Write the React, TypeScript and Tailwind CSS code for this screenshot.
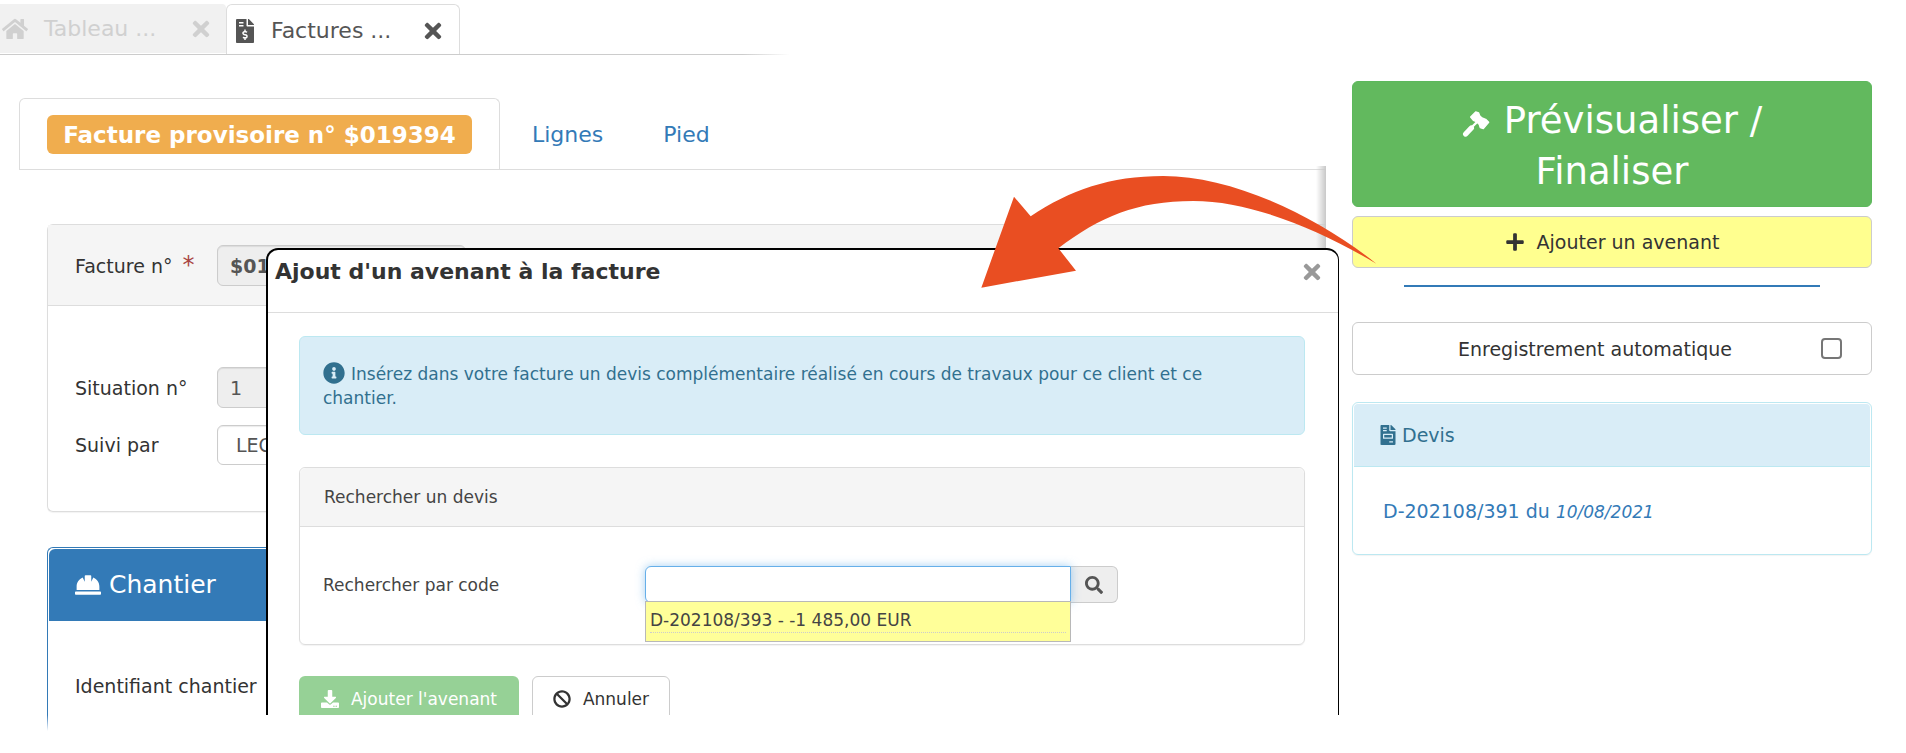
import { useState, type ReactNode } from "react";
import {
  FaBan,
  FaDownload,
  FaFileInvoice,
  FaFileInvoiceDollar,
  FaHardHat,
  FaHome,
  FaInfoCircle,
  FaPlus,
  FaSearch,
  FaTimes,
} from "react-icons/fa";

function GavelIcon({ className }: { className: string }) {
  return (
    <svg aria-hidden="true" viewBox="60 36 84 81" className={className}>
      <path fill="currentColor" stroke="currentColor" strokeWidth="4" strokeLinejoin="round" d="M86 54 L101 39 L110 42 L113 50 L120 57 L131 61 L140 70 L124 89 L115 86 L112 77 L105 69 L94 64 Z" />
      <path stroke="currentColor" strokeWidth="7" d="M110 64 L90 84" />
      <path stroke="currentColor" strokeWidth="16" strokeLinecap="round" d="M88 87 L71 105" />
    </svg>
  );
}

function WindowTabs() {
  return (
    <header className="relative flex h-[55px] items-start pt-1 text-[22px]">
      <div className="absolute bottom-0 left-0 h-px w-[790px] bg-linear-to-r from-[#ccc] from-94% to-white" />
      <div className="flex h-[49px] w-[226px] items-center rounded-tr bg-[#f1f1f1] text-[#d0d0d0]">
        <FaHome className="ml-0.5 size-[26px]" />
        <a href="#tableau" className="ml-4">Tableau ...</a>
        <button aria-label="Fermer Tableau" className="mr-[13px] ml-auto">
          <FaTimes className="size-6" />
        </button>
      </div>
      <div className="relative flex h-[50px] w-[234px] items-center rounded-t-md border border-b-0 border-[#ddd] bg-white pt-[3px] text-[#555]">
        <FaFileInvoiceDollar className="ml-1.5 size-6" />
        <a href="#factures" className="ml-3.5">Factures ...</a>
        <button aria-label="Fermer Factures" className="mr-3.5 ml-auto">
          <FaTimes className="size-6" />
        </button>
      </div>
    </header>
  );
}

function InvoiceTabs() {
  return (
    <nav className="flex h-[72px] border-b border-[#ddd] text-[22px] text-[#337ab7]">
      <div className="h-[71px] w-[481px] rounded-t-md border border-b-0 border-[#ddd] bg-white">
        <a href="#facture" className="mx-[27px] mt-4 flex h-[39px] items-center justify-center rounded-md bg-[#f0ad4e] text-[23px] font-bold whitespace-nowrap text-white">
          Facture provisoire n° $019394
        </a>
      </div>
      <a href="#lignes" className="mt-0.5 ml-8 self-center">Lignes</a>
      <a href="#pied" className="mt-0.5 ml-[60px] self-center">Pied</a>
    </nav>
  );
}

function Field({ id, label, value, required, className }: { id: string; label: string; value: string; required?: boolean; className: string }) {
  return (
    <div className="flex items-center">
      <label htmlFor={id} className="w-[142px]">
        {label}
        {required && <span className="ml-2.5 text-2xl leading-none text-[#a94442]">*</span>}
      </label>
      <input id={id} defaultValue={value} readOnly className={`w-[249px] rounded-md border border-[#ccc] text-[#555] shadow-[inset_0_1px_1px_rgba(0,0,0,0.08)] ${className}`} />
    </div>
  );
}

function Invoice() {
  return (
    <main className="min-w-0 flex-1 pt-[43px] pl-[19px]">
      <InvoiceTabs />
      <div className="relative pt-[54px] pl-7">
        <div className="absolute -top-1 right-0 h-[84px] w-2.5 bg-linear-to-r from-transparent to-[#c8c8c8]" />
        <section className="rounded-l-md border border-r-0 border-[#ddd] shadow-[0_1px_1px_rgba(0,0,0,0.05)]">
          <div className="border-b border-[#ddd] bg-[#f5f5f5] pt-5 pb-[19px] pl-[27px]">
            <Field id="facture" label="Facture n°" value="$019394" required className="h-[41px] bg-[#eee] px-3 font-bold" />
          </div>
          <div className="flex flex-col gap-[17px] pt-[61px] pb-[46px] pl-[27px]">
            <Field id="situation" label="Situation n°" value="1" className="h-[41px] bg-[#eee] px-3" />
            <Field id="suivi" label="Suivi par" value="LECLERC" className="h-10 bg-white px-[18px]" />
          </div>
        </section>
        <section className="mt-[35px] rounded-tl-md border border-r-0 border-b-0 border-[#337ab7] p-px">
          <h2 className="flex h-[72px] items-center gap-2 rounded-tl-md bg-[#337ab7] pl-[26px] text-[25px] text-white">
            <FaHardHat className="size-[26px]" />
            Chantier
          </h2>
          <p className="pt-[51px] pb-3.5 pl-[26px]">Identifiant chantier</p>
        </section>
        <div className="h-4 w-px bg-linear-to-b from-[#337ab7] to-white" />
      </div>
    </main>
  );
}

function Sidebar() {
  return (
    <aside className="mt-[26px] mr-[34px] ml-[26px] flex w-[520px] flex-col">
      <button className="rounded-md border border-[#5cb85c] bg-[#62b95e] px-20 pt-[13px] pb-[9px] text-[37px] leading-[51px] text-white">
        <GavelIcon className="mr-3.5 inline h-[27px] w-7 align-[-5px]" />
        Prévisualiser / Finaliser
      </button>
      <button className="mt-[9px] flex h-[52px] items-center justify-center gap-3 rounded-md border border-[#ccc] bg-[#ffff8f] text-[#333]">
        <FaPlus className="size-5" />
        Ajouter un avenant
      </button>
      <hr className="mx-[52px] mt-[17px] border-t-2 border-[#337ab7]" />
      <label className="mt-[35px] flex h-[53px] items-center rounded-md border border-[#ccc] pr-[29px] pl-4">
        <span className="flex-1 text-center">Enregistrement automatique</span>
        <input type="checkbox" className="size-[21px] appearance-none rounded border-2 border-[#767676] bg-white" />
      </label>
      <section className="mt-[27px] rounded-md border border-[#bce8f1] p-px shadow-[0_1px_1px_rgba(0,0,0,0.05)]">
        <h2 className="flex h-[63px] items-center gap-1 rounded-t border-b border-[#bce8f1] bg-[#d9edf7] pl-6 text-[#31708f]">
          <FaFileInvoice className="size-5" />
          Devis
        </h2>
        <p className="pt-[30px] pb-[27px] pl-[29px]">
          <a href="#devis" className="text-[#337ab7]">
            D-202108/391 du <em className="text-[17px]">10/08/2021</em>
          </a>
        </p>
      </section>
    </aside>
  );
}

function ModalPanel({ title, children }: { title: string; children: ReactNode }) {
  return (
    <section className="mt-8 rounded-md border border-[#ddd] shadow-[0_1px_1px_rgba(0,0,0,0.05)]">
      <h3 className="flex h-[59px] items-center rounded-t-md border-b border-[#ddd] bg-[#f5f5f5] px-6">{title}</h3>
      {children}
    </section>
  );
}

function AmendmentDialog() {
  const [code, setCode] = useState("");
  return (
    <div role="dialog" aria-labelledby="dialog-title" className="absolute top-[248px] right-[567px] left-[266px] h-[467px] overflow-hidden rounded-t-xl border-t-2 border-r border-l-2 border-black bg-white text-[17px] text-[#444]">
      <div className="flex h-[63px] items-start justify-between border-b border-[#ddd] pt-2 pr-3.5 pl-[7px]">
        <h2 id="dialog-title" className="text-[22px] leading-7 font-bold text-[#333]">Ajout d'un avenant à la facture</h2>
        <button aria-label="Fermer" className="flex h-7 items-center text-[#999]">
          <FaTimes className="size-6" />
        </button>
      </div>
      <div className="pt-[23px] pr-[33px] pl-[31px]">
        <p className="rounded-md border border-[#bce8f1] bg-[#d9edf7] px-[23px] pt-[25px] pb-6 leading-6 text-[#31708f]">
          <FaInfoCircle className="mr-1.5 inline size-[22px] align-[-4px]" />
          Insérez dans votre facture un devis complémentaire réalisé en cours de travaux pour ce client et ce chantier.
        </p>
        <ModalPanel title="Rechercher un devis">
          <div className="flex items-start pt-[39px] pb-10 pl-[23px]">
            <label htmlFor="code" className="w-[322px] leading-[38px]">Rechercher par code</label>
            <div className="relative w-[426px]">
              <input id="code" value={code} onChange={(e) => setCode(e.target.value)} className="block h-[37px] w-full rounded-l-md border border-[#66afe9] bg-white px-2 shadow-[0_0_10px_rgba(102,175,233,0.6)] outline-none" />
              <ul className="absolute inset-x-0 top-[35px] h-[41px] border border-[#b8b8b8] bg-[#ffff99] px-1">
                <li className="h-[31px] border-b border-dotted border-[#ccc] leading-9 text-[#444]">
                  <button>D-202108/393 - -1 485,00 EUR</button>
                </li>
              </ul>
            </div>
            <button aria-label="Rechercher" className="flex h-[37px] w-[47px] items-center justify-center rounded-r-md border border-l-0 border-[#ccc] bg-[#eee] text-[#555]">
              <FaSearch className="size-[18px]" />
            </button>
          </div>
        </ModalPanel>
        <div className="mt-[31px] flex gap-[13px]">
          <button className="flex h-[46px] w-[220px] items-center justify-center gap-3 rounded-md bg-[#96d196] text-white">
            <FaDownload className="size-[18px]" />
            Ajouter l'avenant
          </button>
          <button className="flex h-[46px] w-[138px] items-center justify-center gap-3 rounded-md border border-[#ccc] text-[#333]">
            <FaBan className="size-[18px]" />
            Annuler
          </button>
        </div>
      </div>
    </div>
  );
}

function Arrow() {
  return (
    <svg aria-hidden="true" viewBox="0 0 1320 780" className="pointer-events-none absolute top-[80px] right-[506px] h-[260px] w-[440px]">
      <path
        fill="#e94e22"
        d="M64 623 L162 350 L212 409 C330 330 450 288 610 288 C810 288 1060 400 1249 551 C1070 445 870 363 700 363 C530 363 420 410 295 505 L348 572 Z"
      />
    </svg>
  );
}

export default function App() {
  return (
    <div className="relative overflow-hidden bg-white font-['DejaVu_Sans',Verdana,sans-serif] text-[19px] leading-7 text-[#333]">
      <WindowTabs />
      <div className="flex items-start">
        <Invoice />
        <Sidebar />
      </div>
      <AmendmentDialog />
      <Arrow />
    </div>
  );
}
